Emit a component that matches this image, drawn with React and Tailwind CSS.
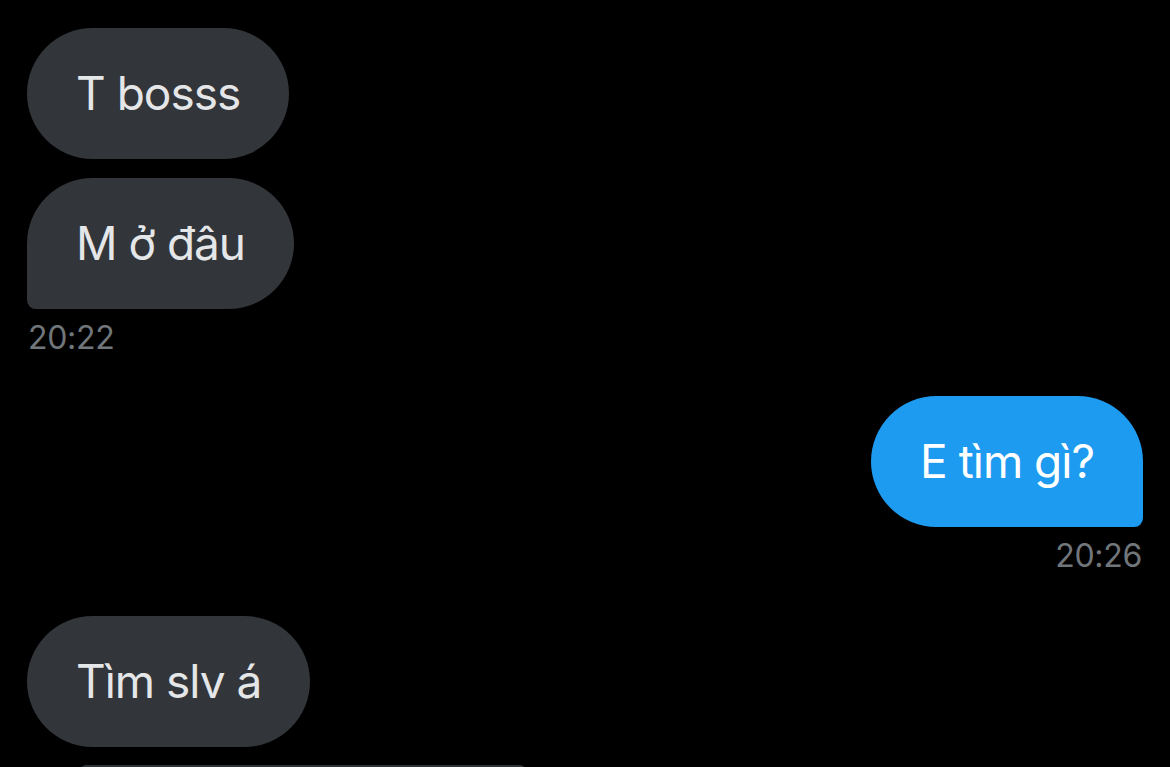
import React from "react";

const messages = [
  { id: 1, side: "in", text: "T bosss", shape: "full" },
  { id: 2, side: "in", text: "M ở đâu", shape: "tail", time: "20:22" },
  { id: 3, side: "out", text: "E tìm gì?", shape: "tail", time: "20:26" },
  { id: 4, side: "in", text: "Tìm slv á", shape: "full" },
];

const Bubble = ({ m }) => {
  const isOut = m.side === "out";
  let round = "rounded-[66px]";
  if (m.shape === "tail") round = isOut ? "rounded-[66px] rounded-br-[9px]" : "rounded-[66px] rounded-bl-[9px]";
  return (
    <div
      className={`flex h-[131px] items-center px-[49px] text-[46px] tracking-[-1px] ${round} ${
        isOut ? "bg-[#1d9bf0] text-white" : "bg-[#323539] text-[#e4e6e8]"
      }`}
    >
      {m.text}
    </div>
  );
};

export default function App() {
  return (
    <div
      className="h-[767px] w-[1170px] overflow-hidden bg-black px-[27px] pt-[28px]"
      style={{ fontFamily: "Inter, 'Noto Sans', sans-serif" }}
    >
      <div className="flex flex-col">
        {messages.map((m, i) => {
          const isOut = m.side === "out";
          const prev = messages[i - 1];
          const gap = !prev ? "" : prev.time ? (isOut ? "mt-[40px]" : "mt-[42px]") : "mt-[19px]";
          return (
            <div key={m.id} className={`flex flex-col ${isOut ? "items-end" : "items-start"} ${gap}`}>
              <Bubble m={m} />
              {m.time && (
                <div className="mt-[11px] h-[36px] px-[1px] text-[32px] leading-[36px] tracking-[-0.3px] text-[#71767b]">
                  {m.time}
                </div>
              )}
            </div>
          );
        })}
        {/* top edge of the next item, cut off by the screen */}
        <div className="ml-[53px] mt-[18px] h-[8px] w-[446px] rounded-t-[6px] border-t-2 border-[#2f3336]" />
      </div>
    </div>
  );
}
